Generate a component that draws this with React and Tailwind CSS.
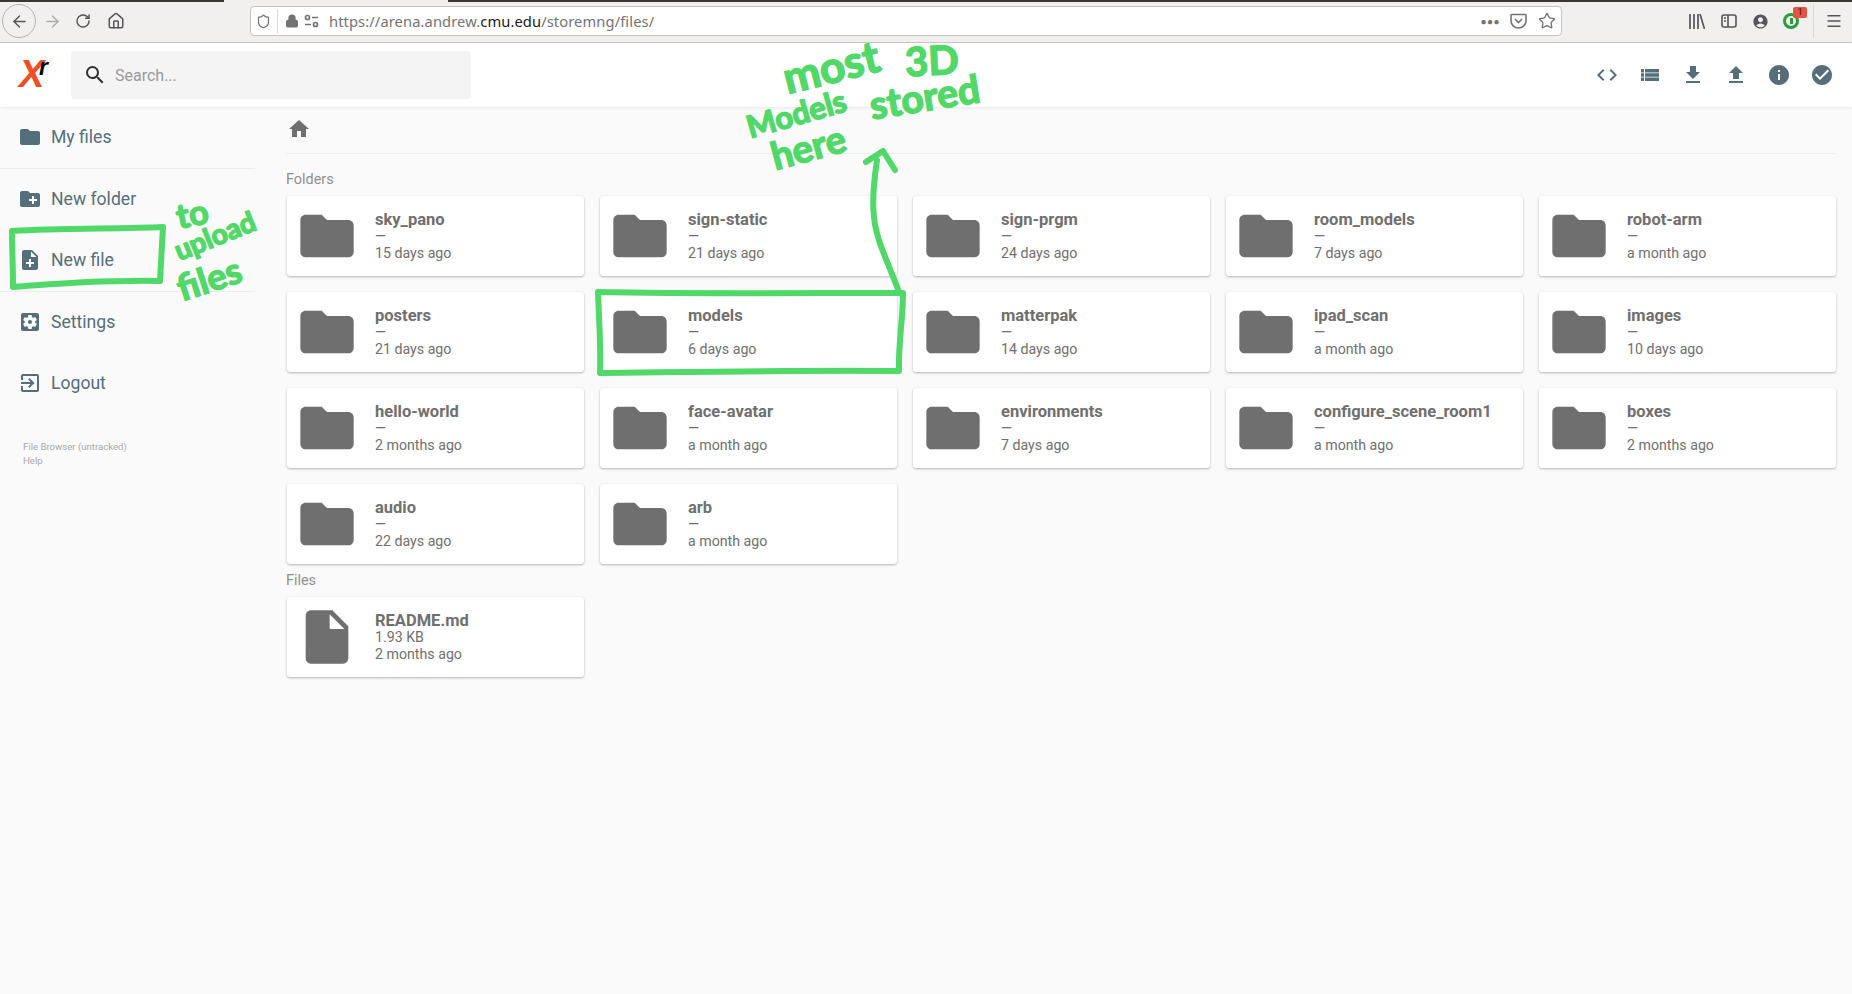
import React from "react";
import { ArrowLeft, ArrowRight, RotateCw, Home, Lock, Star, Menu, Shield } from "lucide-react";
import {
  MdFolder, MdCreateNewFolder, MdNoteAdd, MdSettingsApplications, MdExitToApp, MdHome, MdCode,
  MdFileDownload, MdFileUpload, MdInfo, MdCheckCircle, MdSearch, MdInsertDriveFile, MdAccountCircle,
} from "react-icons/md";

const folders = [
  ["sky_pano", "15 days ago"], ["sign-static", "21 days ago"], ["sign-prgm", "24 days ago"], ["room_models", "7 days ago"], ["robot-arm", "a month ago"],
  ["posters", "21 days ago"], ["models", "6 days ago"], ["matterpak", "14 days ago"], ["ipad_scan", "a month ago"], ["images", "10 days ago"],
  ["hello-world", "2 months ago"], ["face-avatar", "a month ago"], ["environments", "7 days ago"], ["configure_scene_room1", "a month ago"], ["boxes", "2 months ago"],
  ["audio", "22 days ago"], ["arb", "a month ago"],
];

function Card({ name, size, date, file }) {
  return (
    <div className="h-20 bg-white rounded-[3px] shadow-[0_1px_3px_rgba(0,0,0,0.12),0_1px_2px_rgba(0,0,0,0.18)] flex items-center pl-2 text-[#6f6f6f]">
      {file ? <MdInsertDriveFile size={64} className="shrink-0" /> : <MdFolder size={64} className="shrink-0" />}
      <div className={"ml-4 flex flex-col " + (file ? "" : "pt-[2px]")}>
        <div className={"text-[16.5px] font-bold " + (file ? "leading-[18px]" : "leading-[16px]")}>{name}</div>
        <div className={file ? "text-[14.2px] leading-[15px]" : "text-[14.2px] leading-[12px] pt-[2px]"}>{size}</div>
        <div className={file ? "text-[14.2px] leading-[18px]" : "text-[14.2px] leading-[20px] pt-[1px]"}>{date}</div>
      </div>
    </div>
  );
}

function SideItem({ icon: Icon, label, tall }) {
  return (
    <div className={(tall ? "h-[63px]" : "h-[59px]") + " flex items-center pl-[18px] text-[#546e7a]"}>
      <Icon size={24} className="shrink-0" />
      <span className="ml-[9px] text-[17.6px] pt-[2px]">{label}</span>
    </div>
  );
}

function Hand({ className, children }) {
  return (
    <span className={"absolute font-['Lato',sans-serif] font-bold text-[#50d868] whitespace-nowrap [-webkit-text-stroke:1.5px_#50d868] " + className}>
      {children}
    </span>
  );
}

export default function App() {
  return (
    <div className="relative h-[994px] w-[1852px] overflow-hidden bg-[#fafafa] font-['Roboto',sans-serif]">
      {/* Browser toolbar */}
      <div className="relative h-[43px] bg-[#f1f0ee] border-b border-[#c9c8c6] flex items-center text-[#55555a]">
        <div className="absolute left-0 top-0 h-[2px] w-[224px] bg-[#3b3833]" />
        <div className="absolute left-[448px] right-0 top-0 h-[2px] bg-[#3b3833]" />
        <div className="ml-[2px] w-[34px] h-[34px] rounded-full border border-[#b5b4b2] flex items-center justify-center">
          <ArrowLeft size={19} strokeWidth={1.8} />
        </div>
        <ArrowRight size={19} strokeWidth={1.8} className="ml-[7px] text-[#adacab]" />
        <RotateCw size={16} strokeWidth={2.2} className="ml-[13px]" />
        <Home size={18} strokeWidth={2} className="ml-[16px]" />
        <div className="ml-[125px] h-[30px] w-[1312px] bg-white rounded-[4px] border border-[#c4c3c1] flex items-center text-[#737373]">
          <Shield size={15} strokeWidth={2} className="ml-[5px]" />
          <div className="ml-[6px] h-[24px] w-px bg-[#d8d8d8]" />
          <Lock size={14} strokeWidth={2.5} fill="currentColor" className="ml-[7px]" />
          <svg width="15" height="14" viewBox="0 0 15 14" fill="none" stroke="currentColor" strokeWidth="1.7" className="ml-[5px]">
            <circle cx="3.5" cy="3.5" r="2" /><path d="M8 3.5h6M1 10.5h6" /><circle cx="11.5" cy="10.5" r="2" />
          </svg>
          <span className="ml-[10px] text-[14.7px] tracking-[0.1px] font-['Noto_Sans',sans-serif]">
            https://arena.andrew.<span className="text-[#1a1a1a]">cmu.edu</span>/storemng/files/
          </span>
          <div className="ml-auto flex items-center text-[#737373]">
            <span className="text-[10px] font-bold tracking-[0.5px]">●●●</span>
            <svg width="17" height="16" viewBox="0 0 17 16" fill="none" stroke="currentColor" strokeWidth="1.6" className="ml-[10px]">
              <path d="M2 1.5h13a1 1 0 0 1 1 1V8a7.5 7 0 0 1-15 0V2.5a1 1 0 0 1 1-1z" /><path d="M5 6l3.5 3.500L12 6" />
            </svg>
            <Star size={18} strokeWidth={1.8} className="ml-[11px] mr-[5px]" />
          </div>
        </div>
        <svg width="16" height="15" viewBox="0 0 16 15" stroke="currentColor" strokeWidth="1.7" fill="none" className="ml-[127px]">
          <path d="M1 0v15M5 0v15M9 0v15M11 0l4.500 15" />
        </svg>
        <svg width="16" height="14" viewBox="0 0 16 14" fill="none" stroke="currentColor" strokeWidth="1.6" className="ml-[16px]">
          <rect x="1" y="1" width="14" height="12" rx="2" /><path d="M7 1v12M3 4h2M3 7h2" />
        </svg>
        <MdAccountCircle size={17} className="ml-[15px]" />
        <div className="relative ml-[14px] w-[18px] h-[18px]">
          <div className="w-4 h-4 rounded-full border-[3.5px] border-[#2a9d3f] mt-[1px] flex items-center justify-center">
            <div className="w-[3px] h-[6px] bg-[#2a9d3f]" />
          </div>
          <span className="absolute left-[10px] top-[-5px] w-[14px] h-[11px] bg-[#e8503f] rounded-[2px] text-[9px] leading-[11px] text-center text-[#222]">1</span>
        </div>
        <div className="ml-[12px] h-[34px] w-px bg-[#d9d8d6]" />
        <Menu size={18} strokeWidth={1.8} className="ml-[11px]" />
      </div>

      {/* App header */}
      <div className="relative z-10 h-[64px] bg-white shadow-[0_1px_3px_rgba(0,0,0,0.08)] flex items-center">
        <div className="relative w-[71px] h-full">
          <span className="absolute left-[19px] top-[9px] text-[#ef4f26] text-[38px] leading-[44px] font-bold italic font-['Liberation_Sans',sans-serif]">X</span>
          <span className="absolute left-[39px] top-[12px] text-black text-[23px] leading-[24px] font-bold italic font-['Liberation_Sans',sans-serif]">r</span>
        </div>
        <div className="w-[400px] h-12 bg-[#f4f4f4] rounded-[4px] flex items-center text-[#9a9a9a]">
          <MdSearch size={24} className="ml-[12px] text-[#2f2f2f]" />
          <span className="ml-[8px] text-[16px] pt-[1px]">Search...</span>
        </div>
        <div className="ml-auto flex items-center gap-[19px] pr-[18px] text-[#546e7a]">
          <MdCode size={24} />
          <svg width="24" height="24" viewBox="0 0 24 24" fill="currentColor"><path d="M3 6h3v3.500H3zM7 6h14v3.500H7zM3 10.300h3v3.500H3zM7 10.300h14v3.500H7zM3 14.600h3v3.500H3zM7 14.600h14v3.500H7z" /></svg>
          <MdFileDownload size={24} />
          <MdFileUpload size={24} />
          <MdInfo size={24} />
          <MdCheckCircle size={24} />
        </div>
      </div>

      <div className="flex">
        {/* Sidebar */}
        <aside className="w-[286px] shrink-0">
          <div className="w-[255px] h-[62px] border-b border-[#ececec]">
            <SideItem icon={MdFolder} label="My files" />
          </div>
          <div className="w-[255px] border-b border-[#ececec]">
            <SideItem icon={MdCreateNewFolder} label="New folder" />
            <SideItem tall icon={MdNoteAdd} label="New file" />
          </div>
          <SideItem icon={MdSettingsApplications} label="Settings" />
          <SideItem tall icon={MdExitToApp} label="Logout" />
          <div className="mt-[26px] pl-[23px] text-[9.6px] leading-[14px] text-[#a9a9a9]">
            <div>File Browser (untracked)</div>
            <div>Help</div>
          </div>
        </aside>

        {/* Main */}
        <main className="flex-1 pr-[16px]">
          <div className="h-[47px] border-b border-[#eeeeee] flex items-center text-[#6f6f6f]">
            <MdHome size={24} className="ml-[1px] mt-[-2px]" />
          </div>
          <div className="h-[42px] pt-[17px] text-[14.4px] leading-[18px] text-[#8f8f8f]">Folders</div>
          <div className="grid grid-cols-5 gap-4 pl-[1px]">
            {folders.map(([n, d]) => <Card key={n} name={n} size="—" date={d} />)}
          </div>
          <div className="h-[33px] pt-[8px] text-[14.4px] leading-[18px] text-[#8f8f8f]">Files</div>
          <div className="grid grid-cols-5 gap-4 pl-[1px]">
            <Card file name="README.md" size="1.93 KB" date="2 months ago" />
          </div>
        </main>
      </div>

      {/* Green annotation layer */}
      <svg className="absolute left-0 top-0 z-20 pointer-events-none" width="1852" height="994" fill="none" stroke="#50d868" strokeWidth="6" strokeLinecap="round" strokeLinejoin="round">
        <path d="M12 231C60 228 120 229 163 227C162 245 161 262 160 281C110 280 50 284 13 287C13 265 12 250 12 231Z" />
        <path d="M598 292C690 294 800 293 903 293C903 320 898 345 899 371C800 370 690 372 600 373C601 345 599 320 598 292Z" />
        <path d="M899 292C888 262 876 240 874 217C872 200 874 180 877 160" />
        <path d="M866 162L883 151L895 170" />
      </svg>
      <div className="absolute inset-0 z-20 pointer-events-none">
        <Hand className="left-[782px] top-[42px] text-[44px] leading-[48px] -rotate-[14deg]">most</Hand>
        <Hand className="left-[905px] top-[38px] text-[40px] leading-[44px] -rotate-[3deg]">3D</Hand>
        <Hand className="left-[869px] top-[76px] text-[39px] leading-[40px] -rotate-[9deg]">stored</Hand>
        <Hand className="left-[745px] top-[94px] text-[31px] leading-[38px] -rotate-[16deg]">Models</Hand>
        <Hand className="left-[770px] top-[126px] text-[38px] leading-[40px] -rotate-[15deg]">here</Hand>
        <Hand className="left-[176px] top-[194px] text-[34px] leading-[38px] -rotate-[12deg]">to</Hand>
        <Hand className="left-[172px] top-[218px] text-[28px] leading-[34px] -rotate-[22deg]">upload</Hand>
        <Hand className="left-[176px] top-[260px] text-[36px] leading-[36px] -rotate-[18deg]">files</Hand>
      </div>
    </div>
  );
}
